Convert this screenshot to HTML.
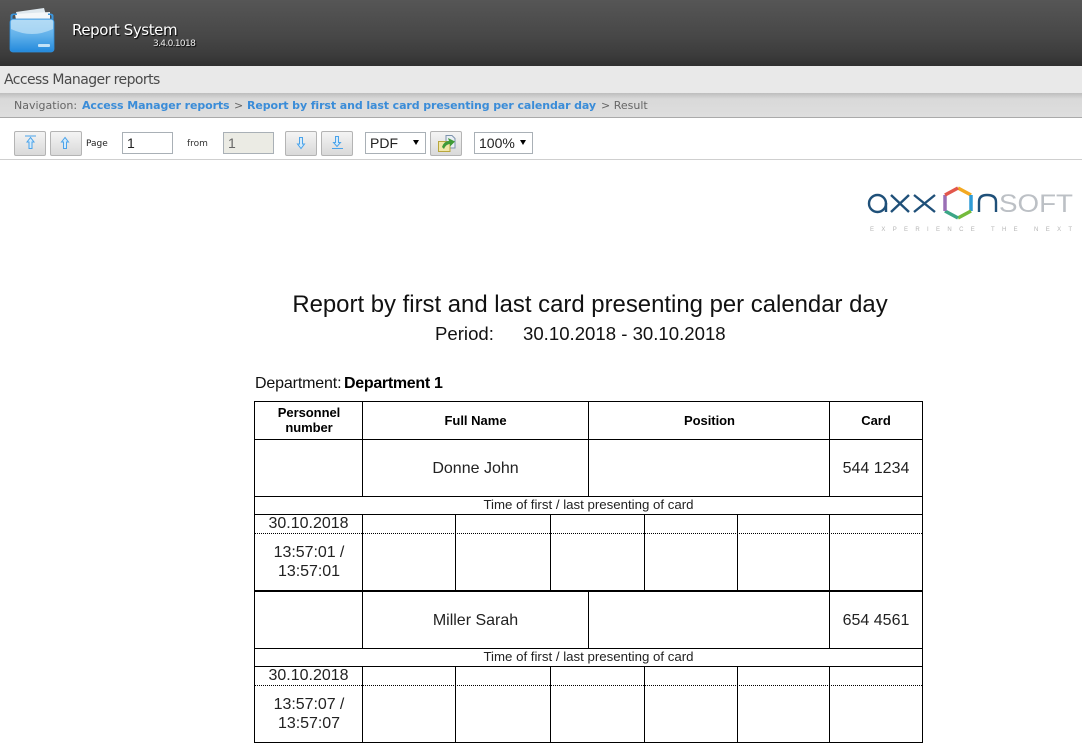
<!DOCTYPE html>
<html><head><meta charset="utf-8"><style>
html,body{margin:0;padding:0;background:#fff;width:1082px;height:747px;overflow:hidden}
body{position:relative;font-family:"Liberation Sans",sans-serif;color:#000}
.a{position:absolute;white-space:nowrap}
.c{position:absolute;white-space:nowrap;text-align:center}
.h{position:absolute;background:#000;height:1px}
.v{position:absolute;background:#000;width:1px}
.d{position:absolute;height:0;border-top:1px dotted #000;left:255px;width:667px}
.b{position:absolute;top:131px;width:30px;height:23px;border:1px solid #b4b4b4;border-radius:2px;background:linear-gradient(#f4f4f4,#d9d9d9)}
.i{position:absolute;box-sizing:border-box;height:22px;border:1px solid #a9b0b6;background:#fff;font-size:14px;line-height:20px;padding-left:4px;color:#222}
.t{font-size:16px;color:#222}
.ar{position:absolute;top:140px;width:0;height:0;border:3px solid transparent;border-bottom:0;border-top:5px solid #000}
</style></head><body>
<div class="a" style="left:0;top:0;width:1082px;height:66px;background:linear-gradient(#565656 0,#474747 55%,#3b3b3b 85%,#2f2f2f 100%)"></div>
<svg class="a" style="left:8px;top:6px" width="50" height="48" viewBox="0 0 50 48">
<defs><linearGradient id="f" x1="0" y1="0" x2="0" y2="1"><stop offset="0" stop-color="#8ec9f2"/><stop offset=".5" stop-color="#5fb0ea"/><stop offset="1" stop-color="#2389dc"/></linearGradient></defs>
<path d="M8 6L36 2L38 9L9 12Z" fill="#dfe8ee"/><path d="M7 8L42 6V14H8Z" fill="#f4f7f9"/>
<path d="M2.500 14V9.500Q3 7.500 6 7.500H9V9H6Q4.500 9 4.500 11V14Z M45.500 14V9.500Q45 7.500 42 7.500H40V9H42Q43.500 9 43.500 11V14Z" fill="#3a95dc"/>
<rect x="2" y="13" width="44" height="33" rx="3" fill="url(#f)" stroke="#2f8fdc" stroke-width=".8"/>
<path d="M3 16Q3 14 5 14H43Q45 14 45 16V23Q24 33 3 23Z" fill="#c2e2f7" opacity=".7"/>
<rect x="30" y="38" width="12" height="3" rx="1" fill="#c3e2f7"/>
</svg>
<div class="a" style="left:72px;top:21px;font:15px/18px 'DejaVu Sans',sans-serif;letter-spacing:-.4px;color:#fff;text-shadow:1px 1px 1px #000">Report System</div>
<div class="a" style="left:153px;top:38px;font:9px/12px 'DejaVu Sans',sans-serif;letter-spacing:-.65px;color:#eee;text-shadow:1px 1px 1px #000">3.4.0.1018</div>

<div class="a" style="left:0;top:66px;width:1082px;height:27px;background:#e9e9e9"></div>
<div class="a" style="left:4px;top:72px;font:14px/17px 'DejaVu Sans',sans-serif;letter-spacing:-.57px;color:#4a4a4a">Access Manager reports</div>
<div class="a" style="left:0;top:93px;width:1082px;height:25px;background:linear-gradient(#bdbdbd,#d9d9d9 25%,#dedede);border-bottom:1px solid #aaa;box-sizing:border-box"></div>
<div class="a" style="left:14px;top:99px;font:11px/14px 'DejaVu Sans',sans-serif;color:#666">Navigation:</div>
<div class="a" style="left:82px;top:99px;font:bold 11px/14px 'DejaVu Sans',sans-serif;color:#3a8cd8;letter-spacing:-.1px">Access Manager reports</div>
<div class="a" style="left:234px;top:99px;font:11px/14px 'DejaVu Sans',sans-serif;color:#666">&gt;</div>
<div class="a" style="left:247px;top:99px;font:bold 11px/14px 'DejaVu Sans',sans-serif;color:#3a8cd8;letter-spacing:-.1px">Report by first and last card presenting per calendar day</div>
<div class="a" style="left:601px;top:99px;font:11px/14px 'DejaVu Sans',sans-serif;color:#666">&gt; Result</div>

<div class="b" style="left:14px"></div><div class="b" style="left:50px"></div>
<div class="b" style="left:285px"></div><div class="b" style="left:321px"></div><div class="b" style="left:430px"></div>
<svg class="a" style="left:14px;top:131px" width="340" height="25" fill="#d4ebfc" stroke="#4aa3ea" stroke-width="1">
<path d="M11 5H22" fill="none"/><path d="M16.500 6.500L13 11H15V17.500H18V11H20Z"/>
<path d="M51 6.500L47.500 11H49.500V17.500H52.500V11H54.500Z"/>
<path d="M285.500 6.500V13H283.500L287 17.500L290.500 13H288.500V6.500Z"/>
<path d="M321.500 5.500V11.500H319.500L323 15.500L326.500 11.500H324.500V5.500Z"/><path d="M318 17.500H329" fill="none"/>
</svg>
<svg class="a" style="left:430px;top:131px" width="32" height="25">
<path d="M16 4.500H22L25 7.500V17H16Z" fill="#e9eef4" stroke="#7d93ad"/>
<path d="M8.500 10.500H20V20.500H8.500Z" fill="#f1e7a8" stroke="#b8a63c"/>
<path d="M12 16Q14 10 19 10L18 7L25 10.500L20 15.500V13Q16 13 14 18Z" fill="#3f9b37"/>
</svg>
<div class="a" style="left:86px;top:138px;font:9px/12px 'DejaVu Sans',sans-serif;color:#222">Page</div>
<div class="i" style="left:122px;top:132px;width:51px">1</div>
<div class="a" style="left:187px;top:138px;font:9px/12px 'DejaVu Sans',sans-serif;color:#333">from</div>
<div class="i" style="left:223px;top:132px;width:51px;background:#ebebe4;color:#666">1</div>
<div class="i" style="left:365px;top:132px;width:61px">PDF</div>
<div class="ar" style="left:413px"></div>
<div class="i" style="left:474px;top:132px;width:59px">100%</div>
<div class="ar" style="left:520px"></div>
<div class="a" style="left:0;top:159px;width:1082px;height:1px;background:#cfcfcf"></div>

<svg class="a" style="left:860px;top:178px" width="222" height="60" viewBox="0 0 222 60">
<g fill="none" stroke="#1f5079" stroke-width="2.400">
<rect x="9" y="17" width="17" height="17" rx="8.500"/><path d="M26 25V34"/>
<path d="M31 17L49 34M49 17L31 34M54 17L75 34M75 17L54 34"/>
<path d="M119 34V24Q119 17 127 17Q136 17 136 24V34"/></g>
<g fill="none" stroke-width="3.500">
<path d="M98 10L111 17" stroke="#f3a921"/><path d="M111 17V33" stroke="#2e9bd6"/>
<path d="M111 33L98 40" stroke="#74bb3c"/><path d="M98 40L85 33" stroke="#3ba686"/>
<path d="M85 33V17" stroke="#9a6fb5"/><path d="M85 17L98 10" stroke="#e2574c"/></g>
<text x="139" y="34" font-family="Liberation Sans,sans-serif" font-size="25" fill="#bcc0c5" textLength="74" lengthAdjust="spacingAndGlyphs">SOFT</text>
<text x="10" y="53" font-family="Liberation Sans,sans-serif" font-size="6" fill="#b5b5b5" textLength="202">E X P E R I E N C E &#160; T H E &#160; N E X T</text>
</svg>

<div class="c" style="left:254px;width:672px;top:290px;font-size:23.920px;line-height:29px;color:#111">Report by first and last card presenting per calendar day</div>
<div class="a" style="left:435px;top:323px;font-size:18.600px;line-height:21px;color:#111">Period:</div>
<div class="a" style="left:523px;top:323px;font-size:18.600px;line-height:21px;color:#111">30.10.2018 - 30.10.2018</div>
<div class="a" style="left:255px;top:374px;font-size:16px;line-height:19px;letter-spacing:-.15px;color:#111">Department:</div>
<div class="a" style="left:344px;top:374px;font-size:16px;line-height:19px;font-weight:bold;letter-spacing:-.3px">Department 1</div>

<div class="h" style="left:254px;width:669px;top:401px"></div>
<div class="h" style="left:254px;width:669px;top:439px"></div>
<div class="h" style="left:254px;width:669px;top:496px"></div>
<div class="h" style="left:254px;width:669px;top:514px"></div>
<div class="d" style="top:533px"></div>
<div class="h" style="left:254px;width:669px;top:590px;height:2px"></div>
<div class="h" style="left:254px;width:669px;top:648px"></div>
<div class="h" style="left:254px;width:669px;top:666px"></div>
<div class="d" style="top:685px"></div>
<div class="h" style="left:254px;width:669px;top:742px"></div>

<div class="v" style="left:254px;top:401px;height:342px"></div>
<div class="v" style="left:922px;top:401px;height:342px"></div>
<div class="v" style="left:362px;top:401px;height:95px"></div>
<div class="v" style="left:588px;top:401px;height:95px"></div>
<div class="v" style="left:829px;top:401px;height:95px"></div>
<div class="v" style="left:362px;top:514px;height:77px"></div>
<div class="v" style="left:455px;top:514px;height:77px"></div>
<div class="v" style="left:550px;top:514px;height:77px"></div>
<div class="v" style="left:644px;top:514px;height:77px"></div>
<div class="v" style="left:737px;top:514px;height:77px"></div>
<div class="v" style="left:829px;top:514px;height:77px"></div>
<div class="v" style="left:362px;top:591px;height:57px"></div>
<div class="v" style="left:588px;top:591px;height:57px"></div>
<div class="v" style="left:829px;top:591px;height:57px"></div>
<div class="v" style="left:362px;top:666px;height:77px"></div>
<div class="v" style="left:455px;top:666px;height:77px"></div>
<div class="v" style="left:550px;top:666px;height:77px"></div>
<div class="v" style="left:644px;top:666px;height:77px"></div>
<div class="v" style="left:737px;top:666px;height:77px"></div>
<div class="v" style="left:829px;top:666px;height:77px"></div>

<div class="c" style="left:255px;width:108px;top:405px;font-size:13px;line-height:15px;font-weight:bold;letter-spacing:-.05px">Personnel<br>number</div>
<div class="c" style="left:363px;width:225px;top:413px;font-size:13px;line-height:15px;font-weight:bold">Full Name</div>
<div class="c" style="left:589px;width:241px;top:413px;font-size:13px;line-height:15px;font-weight:bold;letter-spacing:-.05px">Position</div>
<div class="c" style="left:830px;width:92px;top:413px;font-size:13px;line-height:15px;font-weight:bold">Card</div>

<div class="c t" style="left:363px;width:225px;top:460px;line-height:18px">Donne John</div>
<div class="c t" style="left:830px;width:92px;top:460px;line-height:18px">544 1234</div>
<div class="c" style="left:255px;width:667px;top:497px;font-size:13.250px;line-height:16px;color:#222">Time of first / last presenting of card</div>
<div class="c t" style="left:255px;width:108px;top:543px;line-height:19px;letter-spacing:-.05px">13:57:01 /<br>13:57:01</div>
<div class="c t" style="left:255px;width:107px;top:515px;line-height:18px">30.10.2018</div>

<div class="c t" style="left:363px;width:225px;top:612px;line-height:18px">Miller Sarah</div>
<div class="c t" style="left:830px;width:92px;top:612px;line-height:18px">654 4561</div>
<div class="c" style="left:255px;width:667px;top:649px;font-size:13.250px;line-height:16px;color:#222">Time of first / last presenting of card</div>
<div class="c t" style="left:255px;width:107px;top:667px;line-height:18px">30.10.2018</div>
<div class="c t" style="left:255px;width:108px;top:695px;line-height:19px;letter-spacing:-.05px">13:57:07 /<br>13:57:07</div>
</body></html>
